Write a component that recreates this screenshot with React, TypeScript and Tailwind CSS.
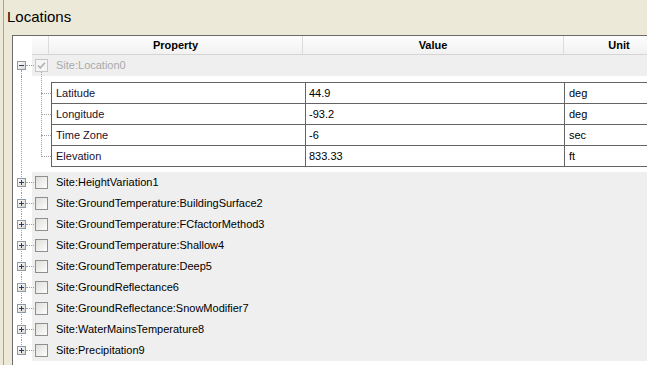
import React from 'react';

const props = [
  { name: 'Latitude', value: '44.9', unit: 'deg' },
  { name: 'Longitude', value: '-93.2', unit: 'deg' },
  { name: 'Time Zone', value: '-6', unit: 'sec' },
  { name: 'Elevation', value: '833.33', unit: 'ft' },
];

const sites = [
  'Site:HeightVariation1',
  'Site:GroundTemperature:BuildingSurface2',
  'Site:GroundTemperature:FCfactorMethod3',
  'Site:GroundTemperature:Shallow4',
  'Site:GroundTemperature:Deep5',
  'Site:GroundReflectance6',
  'Site:GroundReflectance:SnowModifier7',
  'Site:WaterMainsTemperature8',
  'Site:Precipitation9',
];

const ExpandBox = ({ open }: { open?: boolean }) => (
  <svg width="9" height="9" viewBox="0 0 9 9" className="absolute left-[4px] top-[6px] z-10">
    <defs>
      <linearGradient id="eb" x1="0" y1="0" x2="1" y2="1">
        <stop offset="0" stopColor="#ffffff" />
        <stop offset="1" stopColor="#d6d3c9" />
      </linearGradient>
    </defs>
    <rect x="0.5" y="0.5" width="8" height="8" fill="url(#eb)" stroke="#8c99a8" />
    <path d="M2 4.5h5" stroke="#21407a" strokeWidth="1" />
    {!open && <path d="M4.5 2v5" stroke="#21407a" strokeWidth="1" />}
  </svg>
);

const CheckBox = ({ disabled }: { disabled?: boolean }) => (
  <svg width="13" height="13" viewBox="0 0 13 13" className="shrink-0">
    <defs>
      <linearGradient id="cb" x1="0" y1="0" x2="1" y2="1">
        <stop offset="0" stopColor="#dcdcd7" />
        <stop offset="1" stopColor="#ffffff" />
      </linearGradient>
    </defs>
    {disabled ? (
      <>
        <rect x="0.5" y="0.5" width="12" height="12" fill="#f5f5f5" stroke="#c6c6c6" />
        <path d="M3 6.5l2.3 2.3L10 3.8" fill="none" stroke="#b0b0b0" strokeWidth="1.6" />
      </>
    ) : (
      <>
        <rect x="0.5" y="0.5" width="12" height="12" fill="url(#cb)" stroke="#8f8f8f" />
      </>
    )}
  </svg>
);

// gutter with the root tree lines: first, middle or last node
const Gutter = ({ pos, open }: { pos: 'first' | 'mid' | 'last' | 'line'; open?: boolean }) => (
  <div className="relative w-[19px] shrink-0 self-stretch">
    {pos === 'first' && <span className="absolute left-[8px] top-[15px] bottom-0 border-l border-dotted border-[#a0a0a0]" />}
    {pos === 'mid' && <span className="absolute left-[8px] top-0 bottom-0 border-l border-dotted border-[#a0a0a0]" />}
    {pos === 'line' && <span className="absolute left-[8px] top-0 bottom-0 border-l border-dotted border-[#a0a0a0]" />}
    {pos === 'last' && <span className="absolute left-[8px] top-0 h-[7px] border-l border-dotted border-[#a0a0a0]" />}
    {pos !== 'line' && (
      <>
        <span className="absolute left-[13px] top-[10px] w-[8px] border-t border-dotted border-[#a0a0a0] z-10" />
        <ExpandBox open={open} />
      </>
    )}
  </div>
);

export default function App() {
  return (
    <div className="w-[647px] h-[365px] overflow-hidden bg-[#ece9d8] pl-[3px] font-['Liberation_Sans',Arial,sans-serif] text-black">
      <div className="h-full border-l border-[#a6a59b] flex flex-col">
        <div className="h-[35px] shrink-0 pl-[3px] pt-[8px] text-[15px] leading-[18px]">Locations</div>
        <div className="ml-[8px] flex-1 w-[700px] border-l border-t border-[#6b6b6b] bg-white flex flex-col">
          {/* header */}
          <div className="flex h-[19px] shrink-0">
            <div className="w-[19px] shrink-0" />
            <div className="flex flex-1 bg-gradient-to-b from-[#fdfdfd] to-[#f1f1f1] border-b border-[#d5d5d5] text-[11px] font-bold leading-[18px]">
              <div className="w-[17px] shrink-0 border-r border-[#dcdcdc]" />
              <div className="w-[254px] shrink-0 border-r border-[#dcdcdc] text-center">Property</div>
              <div className="w-[261px] shrink-0 border-r border-[#dcdcdc] text-center">Value</div>
              <div className="w-[110px] shrink-0 text-center">Unit</div>
            </div>
          </div>

          {/* expanded node */}
          <div className="flex h-[21px] shrink-0">
            <Gutter pos="first" open />
            <div className="flex-1 bg-[#efefef] flex items-center pl-[3px]">
              <CheckBox disabled />
              <span className="ml-[8px] text-[11px] text-[#a9a9a9]">Site:Location0</span>
            </div>
          </div>

          {/* child properties */}
          <div className="flex shrink-0">
            <Gutter pos="line" />
            <div className="relative w-[19px] shrink-0">
              <span className="absolute left-[9px] top-[-4px] h-[83px] border-l border-dotted border-[#a0a0a0]" />
              {[17, 38, 59, 80].map((t) => (
                <span key={t} className="absolute left-[9px] w-[10px] border-t border-dotted border-[#a0a0a0]" style={{ top: t }} />
              ))}
            </div>
            <div className="flex-1 mt-[6px] mb-[5px] border-t border-l border-[#646464] text-[11px]">
              {props.map((p) => (
                <div key={p.name} className="flex h-[21px] border-b border-[#646464] leading-[20px]">
                  <div className="w-[254px] shrink-0 border-r border-[#646464] pl-[4px] text-[#1c0f2c]">{p.name}</div>
                  <div className="w-[259px] shrink-0 border-r border-[#646464] pl-[3px]">{p.value}</div>
                  <div className="flex-1 pl-[4px]">{p.unit}</div>
                </div>
              ))}
            </div>
          </div>

          {/* collapsed nodes */}
          {sites.map((s, i) => (
            <div key={s} className="flex h-[21px] shrink-0">
              <Gutter pos={i === sites.length - 1 ? 'last' : 'mid'} />
              <div className="flex-1 bg-[#efefef] flex items-center pl-[3px]">
                <CheckBox />
                <span className="ml-[8px] text-[11px]">{s}</span>
              </div>
            </div>
          ))}
        </div>
      </div>
    </div>
  );
}
